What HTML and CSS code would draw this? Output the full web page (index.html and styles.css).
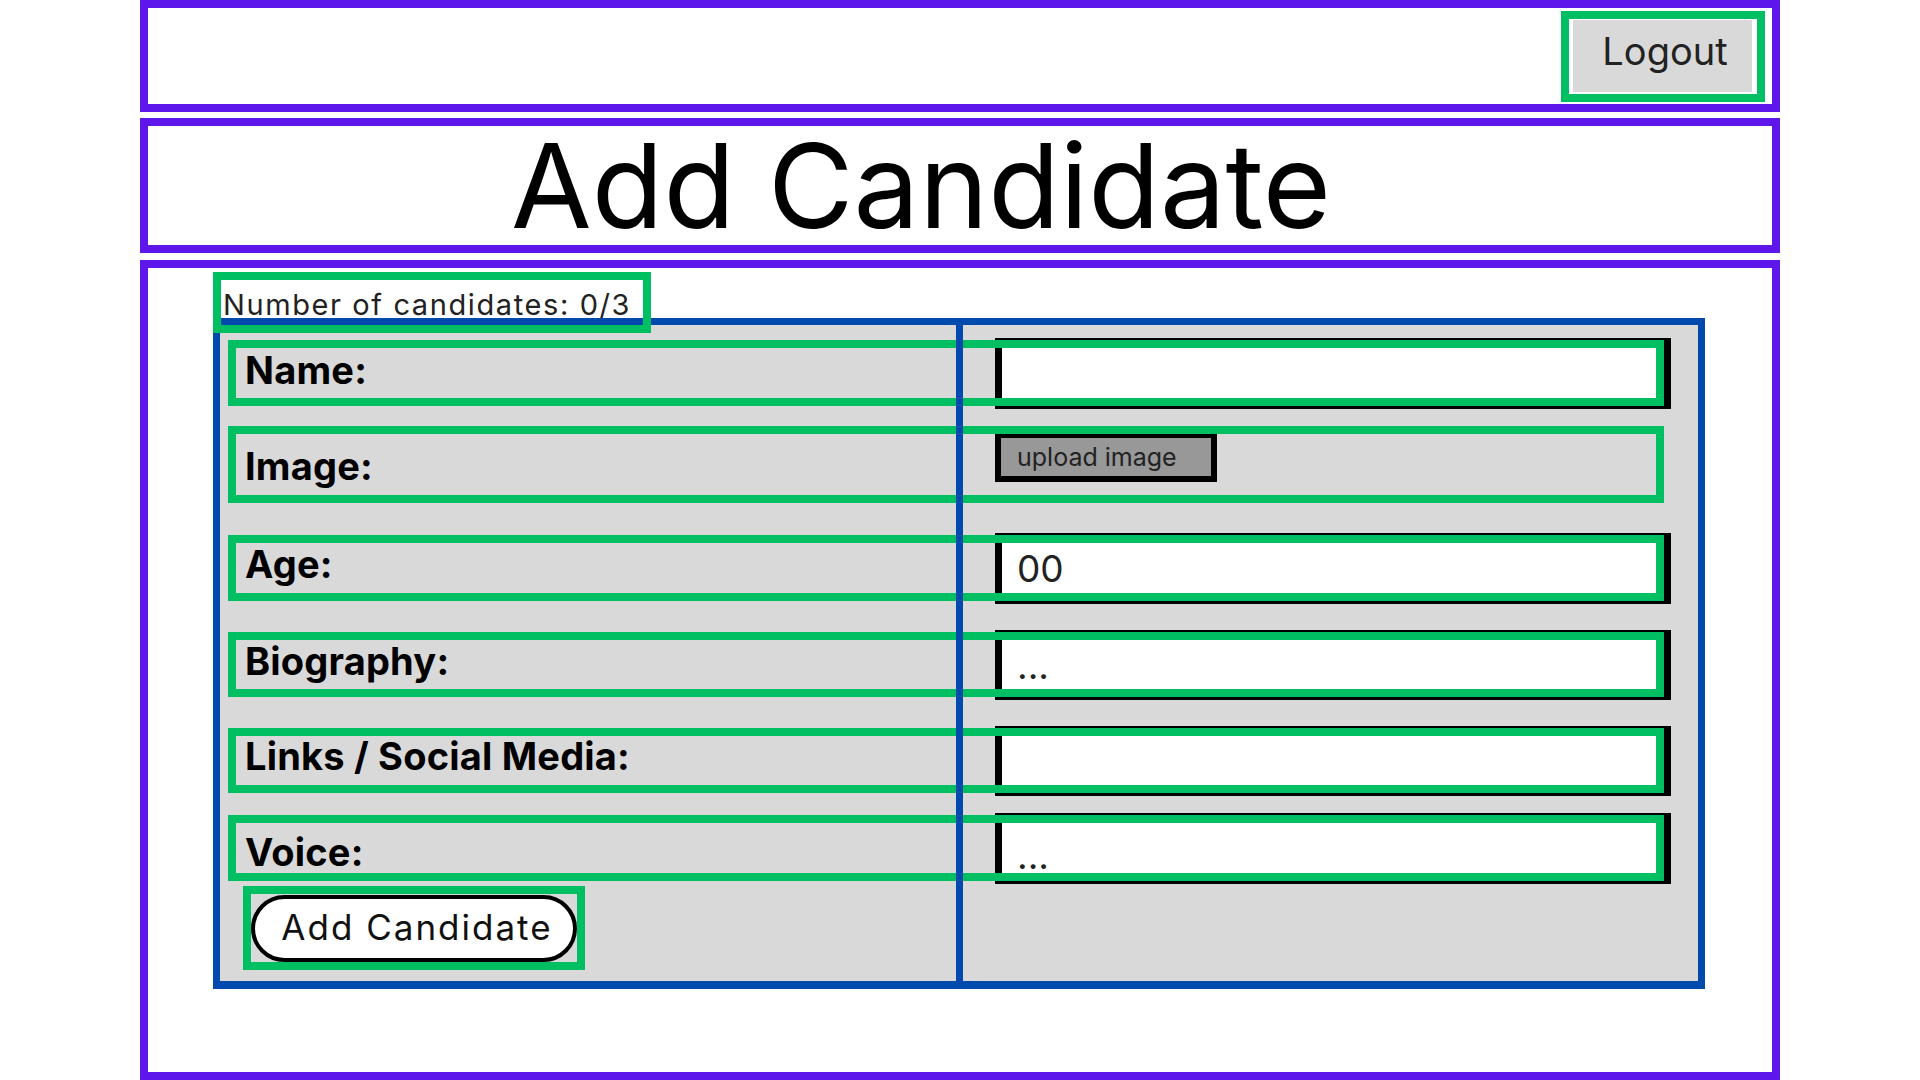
FILE: index.html
```html
<!DOCTYPE html>
<html lang="en">
<head>
<meta charset="utf-8">
<title>Add Candidate</title>
<link rel="stylesheet" href="styles.css">
</head>
<body>
<div class="page">
  <header class="topbar">
    <div class="logout-frame"><button class="logout-btn" type="button">Logout</button></div>
  </header>

  <section class="title-box">
    <h1 class="title">Add Candidate</h1>
  </section>

  <main class="main-box">
    <div class="count">Number of candidates: 0/3</div>
    <form class="form">
      <div class="field field--name">
        <label class="label">Name:</label>
        <input class="text-input" type="text">
      </div>
      <div class="field field--image">
        <label class="label">Image:</label>
        <button class="upload-btn" type="button">upload image</button>
      </div>
      <div class="field field--age">
        <label class="label">Age:</label>
        <input class="text-input" type="text" value="00">
      </div>
      <div class="field field--bio">
        <label class="label">Biography:</label>
        <input class="text-input" type="text" value="...">
      </div>
      <div class="field field--links">
        <label class="label">Links / Social Media:</label>
        <input class="text-input" type="text">
      </div>
      <div class="field field--voice">
        <label class="label">Voice:</label>
        <input class="text-input text-input--low" type="text" value="...">
      </div>
      <div class="submit-frame"><button class="submit-btn" type="button">Add Candidate</button></div>
    </form>
  </main>
</div>
</body>
</html>
```

FILE: styles.css
```css
* { box-sizing: border-box; }

html, body {
  margin: 0;
  padding: 0;
  background: #ffffff;
  font-family: "Inter", "Noto Sans", sans-serif;
  color: #000;
}

.page {
  width: 1920px;
  height: 1080px;
  padding: 0 140px;
  display: flex;
  flex-direction: column;
  overflow: hidden;
}

/* ---------- top bar ---------- */
.topbar {
  height: 112px;
  border: 8px solid #5e17eb;
  display: flex;
  justify-content: flex-end;
  align-items: center;
  padding-right: 7px;
}

.logout-frame {
  border: 8px solid #00bf63;
  padding: 1px 5px 2px 4px;
  background: #fff;
}

.logout-btn {
  display: block;
  width: 179px;
  height: 72px;
  border: none;
  background: #d9d9d9;
  font-family: "Inter", sans-serif;
  font-size: 38px;
  font-weight: 400;
  color: #222;
  padding: 0 0 9px 5px;
}

/* ---------- title ---------- */
.title-box {
  margin-top: 6px;
  height: 135px;
  border: 8px solid #5e17eb;
  display: flex;
  align-items: center;
  justify-content: center;
  padding-right: 78px;
}

.title {
  margin: 0;
  font-size: 117px;
  font-weight: 400;
  line-height: 1;
  color: #000;
}

/* ---------- main ---------- */
.main-box {
  margin-top: 7px;
  height: 820px;
  border: 8px solid #5e17eb;
  display: flex;
  flex-direction: column;
  align-items: flex-start;
}

.count {
  position: relative;
  z-index: 3;
  margin: 4px 0 0 65px;
  height: 61px;
  border: 8px solid #00bf63;
  padding: 7px 12px 0 2px;
  font-size: 29px;
  line-height: 35px;
  letter-spacing: 1.6px;
  color: #222;
  white-space: nowrap;
}

.form {
  position: relative;
  margin: -15px 0 0 65px;
  width: 1492px;
  height: 671px;
  border: 7px solid #004aad;
  border-bottom-width: 8px;
  background: #d9d9d9;
  padding: 15px 0 0 8px;
  display: flex;
  flex-direction: column;
  align-items: flex-start;
}

/* vertical column divider drawn over the rows */
.form::before {
  content: "";
  position: absolute;
  left: 736px;
  top: -7px;
  bottom: -8px;
  width: 7px;
  background: #004aad;
  z-index: 2;
}

.field {
  position: relative;
  display: flex;
  align-items: flex-start;
  width: 1436px;
  height: 66px;
}

.field::after {
  content: "";
  position: absolute;
  inset: 0;
  border: 8px solid #00bf63;
  z-index: 1;
  pointer-events: none;
}

.field--image { margin-top: 20px; height: 77px; }
.field--age   { margin-top: 32px; }
.field--bio   { margin-top: 31px; height: 65px; }
.field--links { margin-top: 31px; height: 65px; }
.field--voice { margin-top: 22px; }

.label {
  flex: none;
  width: 767px;
  padding-left: 17px;
  padding-top: 7px;
  font-size: 38px;
  font-weight: 700;
  letter-spacing: 0.2px;
  color: #000;
  white-space: nowrap;
}

.field--image .label { padding-top: 17px; }
.field--age .label,
.field--bio .label { padding-top: 6px; }
.field--links .label { padding-top: 5px; }
.field--voice .label { padding-top: 14px; }

.text-input {
  flex: none;
  align-self: stretch;
  width: 676px;
  height: auto;
  margin: -2px -7px -3px 0;
  border-style: solid;
  border-color: #000;
  border-width: 3px 7px 3px 7px;
  background: #fff;
  padding: 0 0 0 15px;
  font-family: "Inter", sans-serif;
  font-size: 37px;
  font-weight: 400;
  color: #222;
  outline: none;
}

.text-input--low { padding-top: 14px; }

.upload-btn {
  flex: none;
  margin-top: 7px;
  width: 222px;
  height: 49px;
  border-style: solid;
  border-color: #000;
  border-width: 5px 6px 6px 6px;
  background: #989898;
  padding: 0 0 0 16px;
  text-align: left;
  font-family: "Inter", sans-serif;
  font-size: 25px;
  font-weight: 400;
  color: #222;
}

.submit-frame {
  margin: 5px 0 0 15px;
  width: 342px;
  height: 84px;
  border: 8px solid #00bf63;
  padding-top: 1px;
}

.submit-btn {
  display: block;
  width: 326px;
  height: 67px;
  border: 4px solid #000;
  border-radius: 34px;
  background: #fff;
  font-family: "Inter", sans-serif;
  font-size: 35px;
  font-weight: 400;
  letter-spacing: 2px;
  color: #111;
  padding: 0 0 4px 6px;
}
```
